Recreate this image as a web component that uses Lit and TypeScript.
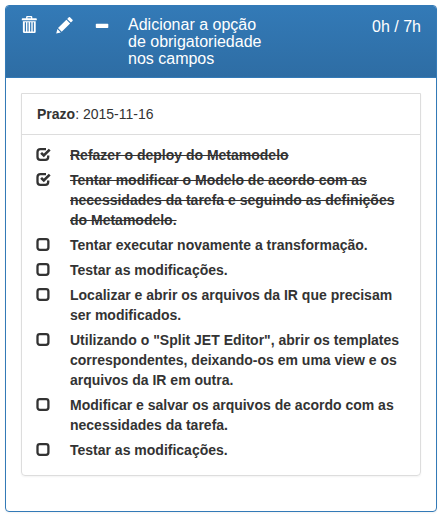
import { LitElement, html, css, svg } from "lit";
import { customElement } from "lit/decorators.js";
import { classMap } from "lit/directives/class-map.js";

interface Step { text: string; done: boolean; }

const steps: Step[] = [
  { text: "Refazer o deploy do Metamodelo", done: true },
  { text: "Tentar modificar o Modelo de acordo com as necessidades da tarefa e seguindo as definições do Metamodelo.", done: true },
  { text: "Tentar executar novamente a transformação.", done: false },
  { text: "Testar as modificações.", done: false },
  { text: "Localizar e abrir os arquivos da IR que precisam ser modificados.", done: false },
  { text: "Utilizando o \"Split JET Editor\", abrir os templates correspondentes, deixando-os em uma view e os arquivos da IR em outra.", done: false },
  { text: "Modificar e salvar os arquivos de acordo com as necessidades da tarefa.", done: false },
  { text: "Testar as modificações.", done: false },
];

@customElement("check-box")
class CheckBox extends LitElement {
  static properties = { checked: { type: Boolean } };
  declare checked: boolean;
  static styles = css`
    :host { display: block; width: 14px; height: 20px; color: #333; }
    .icon { display: block; width: 14px; height: 20px; overflow: visible; fill: none; stroke: currentColor; stroke-width: 2.3; }
  `;
  render() {
    return html`<svg class="icon" viewBox="0 0 14 20">
      ${this.checked
        ? svg`<path d="M9 4.2H3.4Q.5 4.2 .5 7V12Q.5 14.8 3.4 14.8H8.3Q11.2 14.8 11.2 12V10.6"/><path stroke-width="2.6" d="M4.1 7.8L6.8 10.5L12.7 4.6"/>`
        : svg`<rect x=".5" y="4.2" width="10.9" height="10.6" rx="2.3"/>`}
    </svg>`;
  }
}

@customElement("app-root")
class AppRoot extends LitElement {
  static styles = css`
    :host { display: block; box-sizing: border-box; height: 516px; padding: 5px 1px 4px 5px; background: #fff;
      font: 14px/20px "Liberation Sans", Arial, sans-serif; color: #333; }
    .card { box-sizing: border-box; height: 507px; border: 1px solid #337ab7; border-radius: 4px;
      box-shadow: 0 1px 2px rgba(0,0,0,.05); }
    .head { box-sizing: border-box; display: flex; height: 72px; padding: 10px 15px; color: #fff;
      background: linear-gradient(#337ab7, #2e6da4); border-bottom: 1px solid #337ab7; border-radius: 3px 3px 0 0;
      font-size: 16px; line-height: 17.2px; }
    .tools { display: flex; width: 107px; }
    .tool { display: block; width: 18px; height: 18px; margin-right: 18px; overflow: visible; fill: #fff; }
    .title { width: 150px; }
    .time { margin-left: auto; padding-top: 2px; }
    .body { padding: 15px; }
    .box { border: 1px solid #ddd; border-radius: 0 0 4px 4px; box-shadow: 0 1px 2px rgba(0,0,0,.05); }
    .due { padding: 10px 15px; border-bottom: 1px solid #ddd; }
    .list { display: flex; flex-direction: column; gap: 5px; margin: 0; padding: 10px 15px 15px; list-style: none; }
    .row { display: grid; grid-template-columns: 33px 1fr; font-weight: bold; }
    .done { text-decoration: line-through; }
  `;
  render() {
    return html`<section class="card">
      <header class="head">
        <div class="tools">
          <svg class="tool" viewBox="-.8 0 18 18"><path fill-rule="evenodd" d="M5.3 0h4.2q1 0 1 1v1.2h3.7q.8 0 .8.8v1.2H0V3q0-.8.8-.8h3.5V1q0-1 1-1zm.4 1.2v1h3.4v-1zM1.1 5.2h12.8v10.6q0 1.2-1.2 1.2H2.3q-1.2 0-1.2-1.2zM3 6.3v9.3h1.2V6.3zm2.6 0v9.3h1.2V6.3zm2.7 0v9.3h1.2V6.3zm2.6 0v9.3h1.2V6.3z"/></svg>
          <svg class="tool" viewBox=".7 -.5 18 18"><path d="M12.5.8q.6-.6 1.2 0l2.5 2.5q.6.6 0 1.2L14.6 6.1l-3.7-3.7zM10.1 3.2l3.7 3.7-8.4 8.3-3.7-3.6zM1.1 12.5l3.4 3.4L-.1 17z"/></svg>
          <svg class="tool" viewBox="-.8 0 18 18"><rect x="2" y="7.8" width="12.5" height="4.2" rx=".7"/></svg>
        </div>
        <div class="title">Adicionar a opção<br>de obrigatoriedade<br>nos campos</div>
        <div class="time">0h / 7h</div>
      </header>
      <div class="body"><div class="box">
        <div class="due"><b>Prazo</b>: 2015-11-16</div>
        <ul class="list">${steps.map(s => html`<li class="row">
          <check-box ?checked=${s.done}></check-box>
          <span class=${classMap({ done: s.done })}>${s.text}</span></li>`)}</ul>
      </div></div>
    </section>`;
  }
}
